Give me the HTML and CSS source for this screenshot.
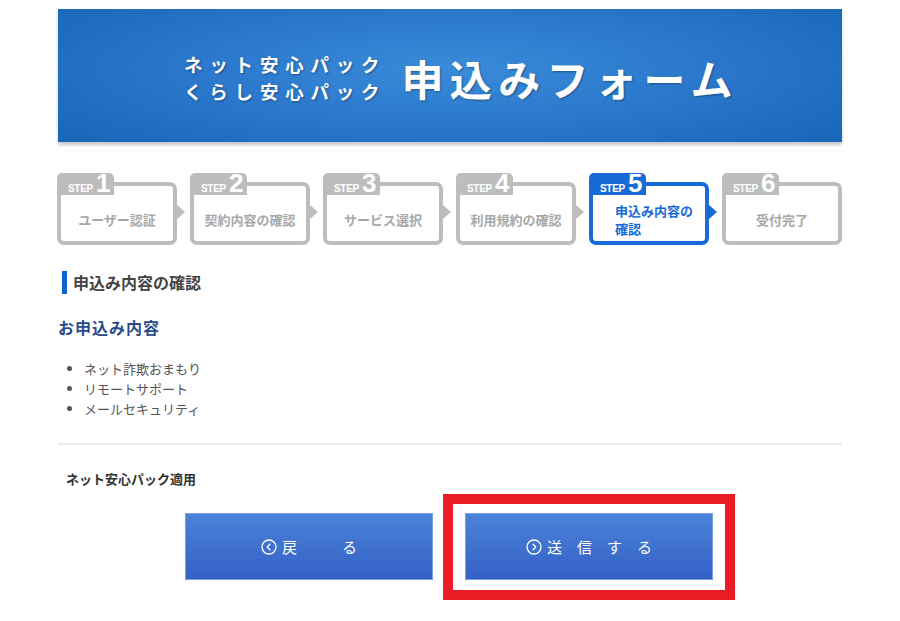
FILE: index.html
```html
<!DOCTYPE html>
<html lang="ja">
<head>
<meta charset="utf-8"/>
<title>申込みフォーム</title>
<link rel="stylesheet" href="styles.css">
</head>
<body>
<div class="page">

	<div class="banner">
		<div class="banner-sub">
			<span>ネット安心パック</span>
			<span>くらし安心パック</span>
		</div>
		<div class="banner-title">申込みフォーム</div>
	</div>

	<ol class="steps">
		<li class="step">
			<div class="step-tab"><span class="step-lbl">STEP</span><span class="step-no">1</span></div>
			<div class="step-body">ユーザー認証</div>
		</li>
		<li class="step">
			<div class="step-tab"><span class="step-lbl">STEP</span><span class="step-no">2</span></div>
			<div class="step-body">契約内容の確認</div>
		</li>
		<li class="step">
			<div class="step-tab"><span class="step-lbl">STEP</span><span class="step-no">3</span></div>
			<div class="step-body">サービス選択</div>
		</li>
		<li class="step">
			<div class="step-tab"><span class="step-lbl">STEP</span><span class="step-no">4</span></div>
			<div class="step-body">利用規約の確認</div>
		</li>
		<li class="step current">
			<div class="step-tab"><span class="step-lbl">STEP</span><span class="step-no">5</span></div>
			<div class="step-body">申込み内容の<br>確認</div>
		</li>
		<li class="step last">
			<div class="step-tab"><span class="step-lbl">STEP</span><span class="step-no">6</span></div>
			<div class="step-body">受付完了</div>
		</li>
	</ol>

	<h2 class="sec-title">申込み内容の確認</h2>

	<h3 class="sub-title">お申込み内容</h3>

	<ul class="items">
		<li>ネット詐欺おまもり</li>
		<li>リモートサポート</li>
		<li>メールセキュリティ</li>
	</ul>

	<hr class="sep">

	<p class="note">ネット安心パック適用</p>

	<div class="actions">
		<a class="btn" href="#">
			<svg class="btn-ico" width="16" height="16" viewBox="0 0 16 16"><circle cx="8" cy="8" r="7" fill="none" stroke="#fff" stroke-width="1.3"/><path d="M9.3 4.8 L6.2 8 L9.3 11.2" fill="none" stroke="#fff" stroke-width="1.3"/></svg>戻　　　る
		</a>
		<div class="btn-wrap">
			<a class="btn" href="#">
				<svg class="btn-ico" width="16" height="16" viewBox="0 0 16 16"><circle cx="8" cy="8" r="7" fill="none" stroke="#fff" stroke-width="1.3"/><path d="M6.7 4.8 L9.8 8 L6.7 11.2" fill="none" stroke="#fff" stroke-width="1.3"/></svg>送　信　す　る
			</a>
			<div class="mark"></div>
		</div>
	</div>

</div>
</body>
</html>
```

FILE: styles.css
```css
body{
	margin: 0;
	background: #fff;
	color: #333;
	font-family: "Noto Sans CJK JP", "Liberation Sans", sans-serif;
}
.page{
	width: 784px;
	margin: 0 auto;
	padding: 9px 0 40px;
}

/* banner */
.banner{
	height: 133px;
	display: flex;
	align-items: center;
	padding: 5px 0 0 126px;
	box-sizing: border-box;
	background: radial-gradient(ellipse 70% 90% at 50% 45%, #3a8bd9 0%, #2b78cc 45%, #1664b6 100%);
	box-shadow: 0 3px 3px rgba(0,0,0,0.22);
	color: #fff;
	font-weight: bold;
	text-shadow: 1px 1px 2px rgba(0,0,0,0.35);
}
.banner-sub{
	display: flex;
	flex-direction: column;
	font-size: 18.5px;
	line-height: 27px;
	letter-spacing: 6.8px;
}
.banner-title{
	margin-left: 15px;
	font-size: 42px;
	letter-spacing: 6.4px;
	line-height: 58px;
}

/* steps */
.steps{
	display: flex;
	gap: 13px;
	list-style: none;
	margin: 31px 0 0 -1px;
	padding: 0;
}
.step{
	width: 120px;
	position: relative;
	color: #bdbdbd;
}
.step::after{
	content: "";
	position: absolute;
	left: 120px;
	top: 32px;
	border-left: 8px solid #bdbdbd;
	border-top: 7px solid transparent;
	border-bottom: 7px solid transparent;
}
.step.last::after{ display: none; }
.step-tab{
	position: relative;
	z-index: 1;
	width: 57px;
	height: 22px;
	box-sizing: border-box;
	padding: 5px 0 0 11px;
	background: #bdbdbd;
	border-radius: 5px 5px 0 0;
	color: #fff;
	font-family: "Liberation Sans", sans-serif;
	font-weight: bold;
	font-size: 10px;
	line-height: 22px;
	white-space: nowrap;
}
.step-lbl{ letter-spacing: -0.3px; }
.step-no{
	font-size: 26px;
	line-height: 0;
	margin-left: 3px;
}
.step-body{
	margin-top: -13px;
	height: 63px;
	box-sizing: border-box;
	border: 4px solid #bdbdbd;
	border-radius: 7px;
	padding-top: 12px;
	display: flex;
	align-items: center;
	justify-content: center;
	font-size: 13px;
	font-weight: bold;
	line-height: 18px;
	color: #a8a8a8;
}
.step.current .step-tab{ background: #176bd6; }
.step.current .step-body{
	border-color: #176bd6;
	color: #176bd6;
	justify-content: flex-start;
	padding-left: 22px;
}
.step.current::after{ border-left-color: #176bd6; }

/* content */
.sec-title{
	margin: 26px 0 0 4px;
	padding-left: 6px;
	border-left: 5px solid #0b64cf;
	font-size: 16px;
	line-height: 23px;
	font-weight: bold;
	color: #444;
}
.sub-title{
	margin: 23px 0 0 0;
	font-size: 16px;
	letter-spacing: 1px;
	line-height: 20px;
	font-weight: bold;
	color: #2a4a8c;
}
.items{
	margin: 22px 0 0 0;
	padding-left: 26px;
	font-size: 13px;
	line-height: 20px;
	color: #555;
}
.sep{
	margin: 24px 0 0 0;
	border: 0;
	height: 2px;
	background: #ececec;
}
.note{
	margin: 25px 0 0 8px;
	font-size: 13px;
	line-height: 18px;
	font-weight: bold;
	color: #333;
}

/* buttons */
.actions{
	display: flex;
	justify-content: center;
	gap: 32px;
	margin: 25px 0 0 -2px;
}
.btn{
	width: 248px;
	height: 67px;
	box-sizing: border-box;
	display: flex;
	align-items: center;
	justify-content: center;
	border: 1px solid #7aa0e0;
	background: linear-gradient(#4b83d9, #3460c6);
	color: #fff;
	font-size: 15px;
	text-decoration: none;
}
.btn-ico{ margin-right: 5px; }
.btn-wrap{ position: relative; }
.mark{
	position: absolute;
	left: -22px;
	top: -19px;
	right: -22px;
	bottom: -20px;
	border: 10px solid #ec1c24;
}
```
